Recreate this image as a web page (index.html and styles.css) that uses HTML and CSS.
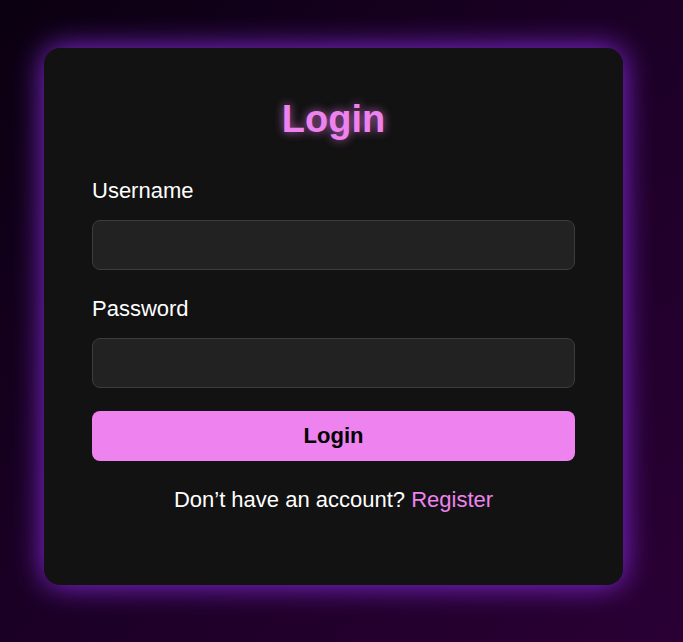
FILE: index.html
```html
<!DOCTYPE html>
<html lang="en">
<head>
<meta charset="utf-8">
<title>Login</title>
<link rel="stylesheet" href="styles.css">
</head>
<body>
<main class="page">
  <form class="card">
    <h2 class="title">Login</h2>
    <label class="label" for="username">Username</label>
    <input class="field" id="username" type="text">
    <label class="label" for="password">Password</label>
    <input class="field field-last" id="password" type="password">
    <button class="btn" type="button">Login</button>
    <p class="foot">Don’t have an account? <a class="link" href="#">Register</a></p>
  </form>
</main>
</body>
</html>
```
FILE: styles.css
```css
html, body {
  margin: 0;
  padding: 0;
}
body {
  min-height: 100vh;
  background: linear-gradient(135deg, #0a0010 0%, #1a0024 45%, #2a0034 100%);
  font-family: "Liberation Sans", Arial, sans-serif;
  color: #fff;
}
.page {
  padding: 48px 0 57px 44px;
  display: flex;
}
.card {
  width: 579px;
  box-sizing: border-box;
  padding: 48px 48px 48px;
  background: #121212;
  border-radius: 16px;
  box-shadow: 0 0 30px #8a2be2;
  display: flex;
  flex-direction: column;
}
.title {
  margin: 2px 0 37px;
  text-align: center;
  font-size: 38px;
  font-weight: bold;
  color: #ee82ee;
  text-shadow: 0 0 10px rgba(238, 130, 238, 0.7);
}
.label {
  display: block;
  font-size: 22px;
  margin-bottom: 16px;
}
.field {
  height: 50px;
  box-sizing: border-box;
  background: #222;
  border: 1px solid #3c3c3c;
  border-radius: 8px;
  margin: 0 0 26px;
  color: #fff;
  font-size: 20px;
  padding: 0 12px;
}
.field-last {
  margin-bottom: 23px;
}
.btn {
  height: 50px;
  border: none;
  border-radius: 8px;
  background: #ee82ee;
  color: #000;
  font-family: "Liberation Sans", Arial, sans-serif;
  font-size: 22px;
  font-weight: bold;
}
.foot {
  margin: 26px 0 24px;
  text-align: center;
  font-size: 22px;
}
.link {
  color: #ee82ee;
  text-decoration: none;
}
```
